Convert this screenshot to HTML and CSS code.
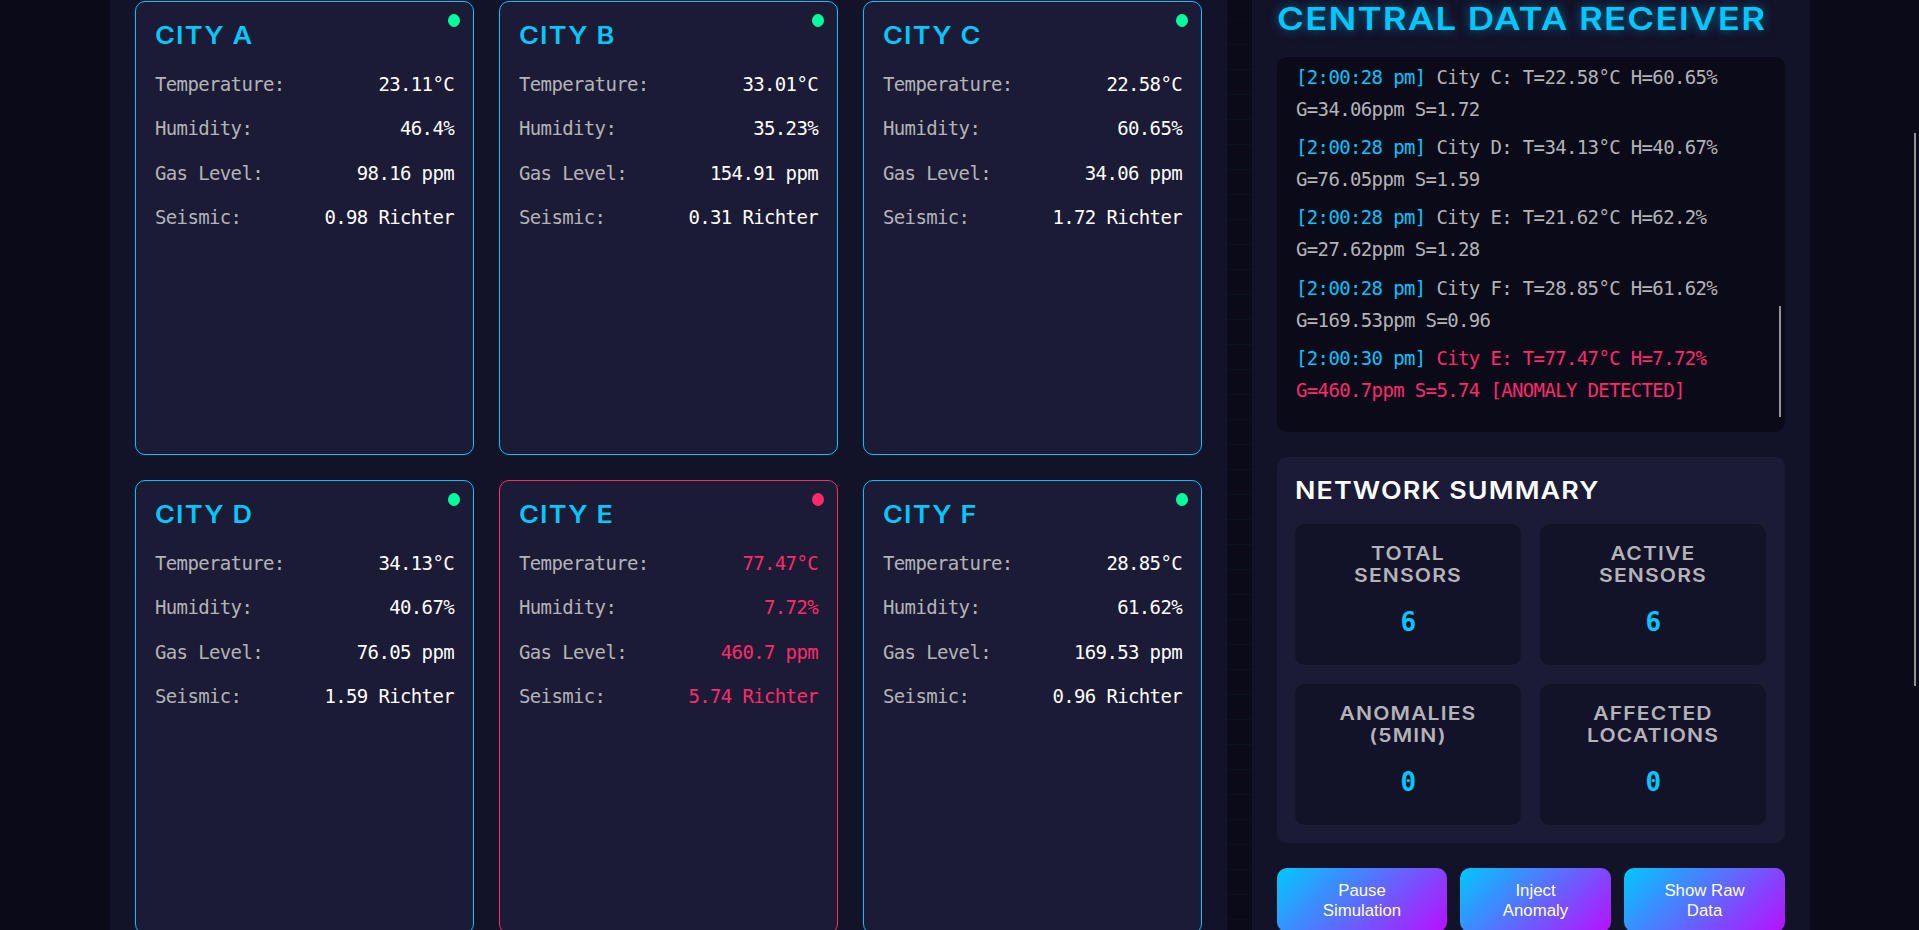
FILE: index.html
```html
<!DOCTYPE html>
<html lang="en">
<head>
<meta charset="utf-8">
<title>Sensor Network</title>
<link rel="stylesheet" href="styles.css">
</head>
<body>
<main class="dashboard">
  <section class="panel cities">
    <article class="card"><i class="dot"></i><h3>CITY A</h3>
      <p><span>Temperature:</span><b>23.11°C</b></p><p><span>Humidity:</span><b>46.4%</b></p><p><span>Gas Level:</span><b>98.16 ppm</b></p><p><span>Seismic:</span><b>0.98 Richter</b></p></article>
    <article class="card"><i class="dot"></i><h3>CITY B</h3>
      <p><span>Temperature:</span><b>33.01°C</b></p><p><span>Humidity:</span><b>35.23%</b></p><p><span>Gas Level:</span><b>154.91 ppm</b></p><p><span>Seismic:</span><b>0.31 Richter</b></p></article>
    <article class="card"><i class="dot"></i><h3>CITY C</h3>
      <p><span>Temperature:</span><b>22.58°C</b></p><p><span>Humidity:</span><b>60.65%</b></p><p><span>Gas Level:</span><b>34.06 ppm</b></p><p><span>Seismic:</span><b>1.72 Richter</b></p></article>
    <article class="card"><i class="dot"></i><h3>CITY D</h3>
      <p><span>Temperature:</span><b>34.13°C</b></p><p><span>Humidity:</span><b>40.67%</b></p><p><span>Gas Level:</span><b>76.05 ppm</b></p><p><span>Seismic:</span><b>1.59 Richter</b></p></article>
    <article class="card alert"><i class="dot"></i><h3>CITY E</h3>
      <p><span>Temperature:</span><b>77.47°C</b></p><p><span>Humidity:</span><b>7.72%</b></p><p><span>Gas Level:</span><b>460.7 ppm</b></p><p><span>Seismic:</span><b>5.74 Richter</b></p></article>
    <article class="card"><i class="dot"></i><h3>CITY F</h3>
      <p><span>Temperature:</span><b>28.85°C</b></p><p><span>Humidity:</span><b>61.62%</b></p><p><span>Gas Level:</span><b>169.53 ppm</b></p><p><span>Seismic:</span><b>0.96 Richter</b></p></article>
  </section>
  <section class="panel receiver">
    <h2>CENTRAL DATA RECEIVER</h2>
    <div class="log">
      <div class="entry"><time>[2:00:28 pm]</time> City C: T=22.58°C H=60.65%<br>G=34.06ppm S=1.72</div>
      <div class="entry"><time>[2:00:28 pm]</time> City D: T=34.13°C H=40.67%<br>G=76.05ppm S=1.59</div>
      <div class="entry"><time>[2:00:28 pm]</time> City E: T=21.62°C H=62.2%<br>G=27.62ppm S=1.28</div>
      <div class="entry"><time>[2:00:28 pm]</time> City F: T=28.85°C H=61.62%<br>G=169.53ppm S=0.96</div>
      <div class="entry anomaly"><time>[2:00:30 pm]</time> City E: T=77.47°C H=7.72%<br>G=460.7ppm S=5.74 [ANOMALY DETECTED]</div>
      <i class="log-thumb"></i>
    </div>
    <div class="summary">
      <h3>NETWORK SUMMARY</h3>
      <div class="stats">
        <div class="stat"><h4>TOTAL<br>SENSORS</h4><strong>6</strong></div>
        <div class="stat"><h4>ACTIVE<br>SENSORS</h4><strong>6</strong></div>
        <div class="stat"><h4>ANOMALIES<br>(5MIN)</h4><strong>0</strong></div>
        <div class="stat"><h4>AFFECTED<br>LOCATIONS</h4><strong>0</strong></div>
      </div>
    </div>
    <div class="controls">
      <button>Pause<br>Simulation</button><button>Inject<br>Anomaly</button><button>Show Raw<br>Data</button>
    </div>
  </section>
</main>
<i class="page-thumb"></i>
</body>
</html>
```
FILE: styles.css
```css
* { box-sizing: border-box; margin: 0; padding: 0; }
html, body { height: 930px; overflow: hidden; }
body {
  color: #b3b3b8;
  background:
    radial-gradient(ellipse 45% 90% at 55% 50%, transparent 40%, rgba(10,10,24,.75) 100%),
    repeating-linear-gradient(180deg, transparent 0 19px, rgba(0,200,255,.045) 19px 20px, transparent 20px 25px),
    repeating-linear-gradient(90deg, transparent 0 24px, rgba(0,200,255,.03) 24px 25px),
    #0a0a18;
  font-family: "DejaVu Sans Mono", monospace;
  font-size: 19px;
  letter-spacing: -0.64px;
}
h2, h3, h4 { font-family: Inter, sans-serif; font-weight: 600; letter-spacing: 1px; transform-origin: left center; }
.dashboard { display: grid; grid-template-columns: 1117px 558px; gap: 25px; padding-left: 110px; height: 930px; }
.panel { background: #121228; height: 930px; }
.cities { display: grid; grid-template-columns: repeat(3, 339px); grid-template-rows: 454px 454px; gap: 25px; padding: 1px 25px 0; }
.card { position: relative; background: #1b1b35; border: 1px solid #00c3ff; border-radius: 10px; padding: 19px 19px 0; }
.card h3 { width: max-content; color: #00c8ff; font-size: 24px; line-height: 30px; transform: scaleX(1.13); margin-bottom: 11px; }
.card p { display: flex; justify-content: space-between; line-height: 44.4px; }
.card b { color: #fff; font-weight: 400; }
.dot { position: absolute; top: 12px; right: 13px; width: 12px; height: 13px; border-radius: 50%; background: #00ff9d; }
.alert { border-color: #ff2a6d; }
.alert b { color: #ff2a6d; }
.alert .dot { background: #ff2a6d; }
.receiver { padding: 0 25px; }
.receiver h2 { width: max-content; color: #00c8ff; font-size: 31px; line-height: 38px; transform: scaleX(1.18); text-shadow: 0 0 10px rgba(0,200,255,.5); margin-bottom: 19px; }
.log { position: relative; height: 375px; background: #0a0a18; border-radius: 10px; padding: 4px 19px; line-height: 32px; white-space: nowrap; }
.entry { margin-bottom: 6.2px; }
.entry time { color: #00c3ff; }
.anomaly { color: #ff2a6d; }
.log-thumb { position: absolute; right: 4px; top: 249px; width: 2px; height: 111px; background: #939393; }
.summary { margin-top: 25px; height: 386px; background: #1b1b35; border-radius: 10px; padding: 19px 19px 0 18px; }
.summary h3 { width: max-content; color: #fff; font-size: 24px; line-height: 30px; transform: scaleX(1.12); margin-bottom: 18px; }
.stats { display: grid; grid-template-columns: 1fr 1fr; grid-template-rows: 141px 141px; gap: 19px; }
.stat { background: #121228; border-radius: 10px; text-align: center; padding-top: 18px; }
.stat h4 { font-size: 18.5px; line-height: 22px; transform: scaleX(1.14); transform-origin: center; color: #b3b3b8; }
.stat strong { display: block; font-size: 26px; line-height: 40px; margin-top: 16px; color: #00c8ff; }
.controls { display: flex; gap: 13px; margin-top: 25px; }
.controls button { height: 64px; padding-top: 2px; border: 0; border-radius: 10px; color: #fff; font: 16.8px/20px "Liberation Sans", Arial, sans-serif; background: linear-gradient(135deg, #00c8ff, #b80fff); }
.controls button:nth-child(1) { width: 170px; }
.controls button:nth-child(2) { width: 151px; }
.controls button:nth-child(3) { width: 161px; }
.page-thumb { position: absolute; left: 1914px; top: 133px; width: 2px; height: 553px; background: #939393; }
```
